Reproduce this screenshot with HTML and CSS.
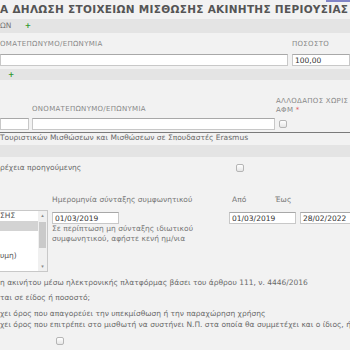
FILE: index.html
```html
<!DOCTYPE html>
<html lang="el">
<head>
    <meta charset="UTF-8">
    <meta name="viewport" content="width=device-width, initial-scale=1.0">
    <title>Δήλωση Στοιχείων Μίσθωσης</title>
    <link rel="stylesheet" href="styles.css">
</head>
<body>
    <div class="page">
        <h1 class="title">Α ΔΗΛΩΣΗ ΣΤΟΙΧΕΙΩΝ ΜΙΣΘΩΣΗΣ ΑΚΙΝΗΤΗΣ ΠΕΡΙΟΥΣΙΑΣ</h1>

        <!-- owners -->
        <div class="bar">ΩΝ <span class="add">+</span></div>
        <div class="owners">
            <div class="label">ΟΜΑΤΕΠΩΝΥΜΟ/ΕΠΩΝΥΜΙΑ</div>
            <div class="label">ΠΟΣΟΣΤΟ</div>
            <input class="field" type="text">
            <input class="field" type="text" value="100,00">
        </div>

        <!-- tenants -->
        <div class="bar small"><span class="add">+</span></div>
        <div class="tenants">
            <div></div>
            <div class="label">ΟΝΟΜΑΤΕΠΩΝΥΜΟ/ΕΠΩΝΥΜΙΑ</div>
            <div class="label two-line">ΑΛΛΟΔΑΠΟΣ ΧΩΡΙΣ<br>ΑΦΜ <span class="req">*</span></div>
            <input class="field" type="text">
            <input class="field" type="text">
            <span class="check"></span>
        </div>

        <div class="note">Τουριστικών Μισθώσεων και Μισθώσεων σε Σπουδαστές Erasmus</div>
        <div class="bar tall"></div>

        <div class="check-row">
            <span>ρέχεια προηγούμενης</span>
            <span class="check"></span>
        </div>

        <!-- dates -->
        <div class="dates">
            <div class="label-text sign">Ημερομηνία σύνταξης συμφωνητικού</div>
            <div class="label-text from">Από</div>
            <div class="label-text to">Έως</div>

            <div class="listbox">
                <div class="options">
                    <div class="option">ΣΗΣ</div>
                    <div class="option selected"></div>
                    <div class="option"></div>
                    <div class="option"></div>
                    <div class="option">υμη)</div>
                </div>
                <div class="scrollbar">
                    <span class="arrow">&#9652;</span>
                    <span class="thumb"></span>
                    <span class="arrow down">&#9662;</span>
                </div>
            </div>
            <input class="field date sign" type="text" value="01/03/2019">
            <input class="field date from" type="text" value="01/03/2019">
            <input class="field date to" type="text" value="28/02/2022">

            <div class="hint">Σε περίπτωση μη σύνταξης ιδιωτικού<br>συμφωνητικού, αφήστε κενή ημ/νια</div>
        </div>

        <!-- questions -->
        <div class="questions">
            <p class="q1">η ακινήτου μέσω ηλεκτρονικής πλατφόρμας βάσει του άρθρου 111, ν. 4446/2016</p>
            <p class="q2">ται σε είδος ή ποσοστό;</p>
            <p class="q3">χει όρος που απαγορεύει την υπεκμίσθωση ή την παραχώρηση χρήσης</p>
            <p class="q4">χει όρος που επιτρέπει στο μισθωτή να συστήνει Ν.Π. στα οποία θα συμμετέχει και ο ίδιος, ή</p>
            <span class="check last"></span>
        </div>
    </div>
</body>
</html>
```

FILE: styles.css
```css
html, body {
    overflow: hidden;
}

body {
    margin: 0;
    background: #f2f2f2;
    font-family: "DejaVu Sans", Verdana, sans-serif;
    font-size: 7.5px;
    color: #6a6a6a;
    text-align: left;
}

.page {
    width: 350px;
}

.title {
    position: relative;
    margin: 0;
    height: 18px;
    box-sizing: border-box;
    padding-top: 3px;
    font-size: 10.5px;
    line-height: 12px;
    font-weight: bold;
    letter-spacing: 0.3px;
    color: #555;
    white-space: nowrap;
}

/* tab edge peeking in at the top right */
.title::after {
    content: "";
    position: absolute;
    top: 0;
    right: 0;
    width: 24px;
    height: 2px;
    background: #8084c6;
}

.bar {
    margin-top: 1px;
    height: 14px;
    line-height: 14px;
    background: #e4e4e4;
    color: #777;
    white-space: nowrap;
}

.bar.small {
    margin-top: 3px;
    height: 11px;
    line-height: 11px;
}

.bar.tall {
    margin-top: 2px;
    height: 12px;
}

.add {
    margin-left: 11px;
    color: #2f9a2f;
    font-weight: bold;
}

.bar.small .add {
    margin-left: 8px;
}

.label {
    font-size: 7px;
    letter-spacing: 0.3px;
    color: #888;
    line-height: 10px;
    white-space: nowrap;
}

.req {
    color: #e05a5a;
}

.field {
    box-sizing: border-box;
    height: 12px;
    margin: 0;
    padding: 0 2px;
    border: 1px solid #c8c8c8;
    border-top-color: #a8a8a8;
    background: #fff;
    font-family: "DejaVu Sans", Verdana, sans-serif;
    font-size: 7.5px;
    color: #333;
    outline: none;
    min-width: 0;
}

.check {
    display: inline-block;
    box-sizing: border-box;
    width: 8px;
    height: 8px;
    border: 1px solid #b5b5b5;
    border-radius: 2px;
    background: linear-gradient(#fff, #e6e6e6);
}

/* owners */
.owners {
    display: grid;
    grid-template-columns: 288px 1fr;
    grid-template-rows: 21px 12px;
    column-gap: 4px;
}

.owners .label {
    padding-top: 6px;
}

/* tenants */
.tenants {
    display: grid;
    grid-template-columns: 29px 243px 74px;
    grid-template-rows: 21px 12px;
    column-gap: 3px;
    row-gap: 1px;
    margin-top: 16px;
    padding-bottom: 2px;
    border-bottom: 1px solid #7a7a7a;
}

.tenants .label {
    align-self: end;
    padding-bottom: 3px;
}

.tenants .two-line {
    line-height: 8.5px;
    margin-left: -2px;
}

.tenants .check {
    align-self: center;
    margin-left: 1px;
}

.note {
    height: 10px;
    line-height: 10px;
    white-space: nowrap;
}

.check-row {
    display: grid;
    grid-template-columns: 236px auto;
    align-items: center;
    margin-top: 6px;
    height: 10px;
    line-height: 10px;
}

/* dates: listbox | signing date | from | to */
.dates {
    display: grid;
    grid-template-columns: 52px 177px 46px 25px 50px;
    grid-template-rows: 17px 12px auto;
    margin-top: 22px;
}

.label-text {
    grid-row: 1;
    line-height: 10px;
    color: #777;
    white-space: nowrap;
}

.sign {
    grid-column: 2;
}

.from {
    grid-column: 3 / 5;
}

.to {
    grid-column: 4;
}

.label-text.from {
    padding-left: 3px;
}

.date {
    grid-row: 2;
    width: 67px;
}

.date.to {
    grid-column: 5;
}

.hint {
    grid-column: 2 / 5;
    grid-row: 3;
    line-height: 10px;
    color: #777;
}

.listbox {
    grid-column: 1;
    grid-row: 2 / 4;
    display: flex;
    width: 48px;
    height: 62px;
    margin-top: -2px;
    box-sizing: border-box;
    border: 1px solid #c8c8c8;
    border-left: none;
    background: #fff;
}

.options {
    flex: 1;
}

.option {
    height: 10px;
    line-height: 10px;
    color: #555;
    white-space: nowrap;
}

.option.selected {
    background: #d3d3d3;
}

.scrollbar {
    width: 9px;
    display: flex;
    flex-direction: column;
    align-items: center;
    background: #f0f0f0;
}

.arrow {
    height: 9px;
    line-height: 9px;
    font-size: 5px;
    color: #888;
}

.arrow.down {
    margin-top: auto;
}

.thumb {
    width: 7px;
    height: 26px;
    margin-top: 2px;
    background: #cacaca;
}

/* questions */
.questions p {
    margin: 0;
    line-height: 10px;
    white-space: nowrap;
}

.questions .q1 { margin-top: 6px; }
.questions .q2 { margin-top: 5px; }
.questions .q3 { margin-top: 6px; }
.questions .q4 { margin-top: 1px; }

.check.last {
    margin: 7px 0 0 56px;
}
```
